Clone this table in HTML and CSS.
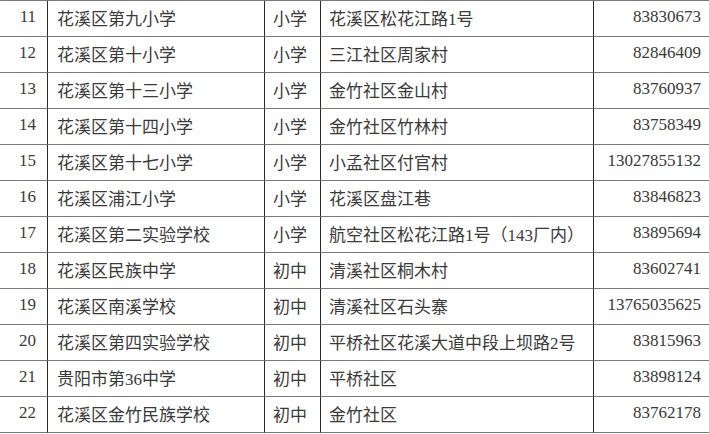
FILE: index.html
```html
<!DOCTYPE html>
<html lang="zh">
<head>
<meta charset="utf-8">
<link rel="stylesheet" href="styles.css">
</head>
<body>
<div class="table">
  <div class="c num">11</div><div class="c name">花溪区第九小学</div><div class="c type">小学</div><div class="c addr">花溪区松花江路1号</div><div class="c tel">83830673</div>
  <div class="c num">12</div><div class="c name">花溪区第十小学</div><div class="c type">小学</div><div class="c addr">三江社区周家村</div><div class="c tel">82846409</div>
  <div class="c num">13</div><div class="c name">花溪区第十三小学</div><div class="c type">小学</div><div class="c addr">金竹社区金山村</div><div class="c tel">83760937</div>
  <div class="c num">14</div><div class="c name">花溪区第十四小学</div><div class="c type">小学</div><div class="c addr">金竹社区竹林村</div><div class="c tel">83758349</div>
  <div class="c num">15</div><div class="c name">花溪区第十七小学</div><div class="c type">小学</div><div class="c addr">小孟社区付官村</div><div class="c tel">13027855132</div>
  <div class="c num">16</div><div class="c name">花溪区浦江小学</div><div class="c type">小学</div><div class="c addr">花溪区盘江巷</div><div class="c tel">83846823</div>
  <div class="c num">17</div><div class="c name">花溪区第二实验学校</div><div class="c type">小学</div><div class="c addr">航空社区松花江路1号（143厂内）</div><div class="c tel">83895694</div>
  <div class="c num">18</div><div class="c name">花溪区民族中学</div><div class="c type">初中</div><div class="c addr">清溪社区桐木村</div><div class="c tel">83602741</div>
  <div class="c num">19</div><div class="c name">花溪区南溪学校</div><div class="c type">初中</div><div class="c addr">清溪社区石头寨</div><div class="c tel">13765035625</div>
  <div class="c num">20</div><div class="c name">花溪区第四实验学校</div><div class="c type">初中</div><div class="c addr">平桥社区花溪大道中段上坝路2号</div><div class="c tel">83815963</div>
  <div class="c num">21</div><div class="c name">贵阳市第36中学</div><div class="c type">初中</div><div class="c addr">平桥社区</div><div class="c tel">83898124</div>
  <div class="c num">22</div><div class="c name">花溪区金竹民族学校</div><div class="c type">初中</div><div class="c addr">金竹社区</div><div class="c tel">83762178</div>
</div>
</body>
</html>
```
FILE: styles.css
```css
html, body {
  margin: 0;
  padding: 0;
  background: #ffffff;
}
body {
  width: 709px;
  height: 434px;
  overflow: hidden;
  font-family: "Liberation Serif", "Noto Sans CJK SC", serif;
  font-size: 17px;
  color: #3a3a3a;
}
.table {
  display: grid;
  grid-template-columns: 48px 217px 56px 273px 1fr;
  grid-auto-rows: 36px;
  border-top: 1px solid #7a7a7a;
}
.c {
  box-sizing: border-box;
  display: flex;
  align-items: center;
  border-bottom: 1px solid #7a7a7a;
  border-right: 1px solid #2a2a2a;
  padding-bottom: 3px;
  white-space: nowrap;
  overflow: hidden;
}
.num {
  justify-content: flex-end;
  padding-right: 11px;
}
.name {
  padding-left: 9px;
}
.type {
  padding-left: 8px;
}
.addr {
  padding-left: 8px;
}
.tel {
  justify-content: flex-end;
  padding-right: 8px;
  border-right: none;
}
```
